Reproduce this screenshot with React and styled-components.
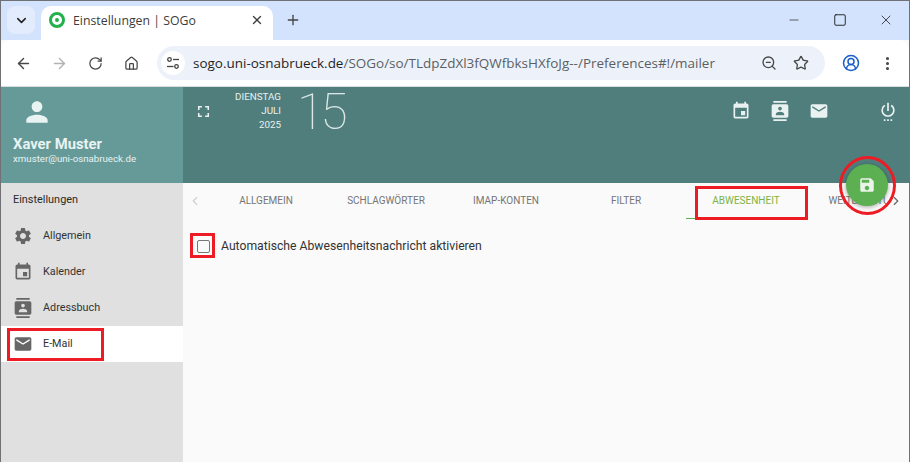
import React from 'react';
import styled, { createGlobalStyle } from 'styled-components';
import {
  MdContacts,
  MdEmail,
  MdEvent,
  MdFullscreen,
  MdPerson,
  MdSave,
  MdSettings,
  MdSettingsPower,
} from 'react-icons/md';
import {
  ArrowLeft,
  ArrowRight,
  ChevronDown,
  ChevronLeft,
  ChevronRight,
  CircleUserRound,
  EllipsisVertical,
  House,
  Minus,
  Plus,
  RotateCw,
  Square,
  Star,
  X,
  ZoomOut,
} from 'lucide-react';

const GlobalStyle = createGlobalStyle`
  html, body {
    margin: 0;
    padding: 0;
    background: #fafafa;
  }
  * {
    box-sizing: border-box;
  }
`;

const Page = styled.div`
  position: relative;
  width: 910px;
  height: 462px;
  overflow: hidden;
  display: flex;
  flex-direction: column;
  border: 1px solid #6f7174;
  border-bottom: none;
  font-family: "Noto Sans", sans-serif;
`;

const TabStrip = styled.div`
  height: 39px;
  flex: none;
  display: flex;
  align-items: flex-end;
  background: #d3e3fd;
  padding-left: 6px;
`;

const TabListButton = styled.div`
  width: 28px;
  height: 28px;
  margin-bottom: 6px;
  border-radius: 8px;
  background: #e2ecfc;
  display: flex;
  align-items: center;
  justify-content: center;
  color: #1f1f1f;
`;

const Tab = styled.div`
  width: 232px;
  height: 34px;
  margin-left: 6px;
  padding: 0 9px 6px 8px;
  border-radius: 10px 10px 0 0;
  background: #fff;
  display: flex;
  align-items: center;
  color: #3c3c3c;
  font-family: "Open Sans", sans-serif;
  font-size: 12.3px;
`;

const Favicon = styled.span`
  width: 16px;
  height: 16px;
  flex: none;
  border-radius: 50%;
  border: 3px solid #22b14c;
  display: flex;
  align-items: center;
  justify-content: center;
  margin-right: 8px;

  &::after {
    content: '';
    width: 4px;
    height: 4px;
    border-radius: 50%;
    background: #22b14c;
  }
`;

const TabTitle = styled.span`
  flex: 1;
`;

const NewTab = styled.div`
  width: 40px;
  height: 34px;
  padding-bottom: 6px;
  display: flex;
  align-items: center;
  justify-content: center;
  color: #444;
`;

const WindowControls = styled.div`
  margin-left: auto;
  height: 39px;
  display: flex;
  color: #1f1f1f;
`;

const WindowButton = styled.div`
  width: 46px;
  display: flex;
  align-items: center;
  justify-content: center;
  padding-bottom: 1px;
`;

const Toolbar = styled.div`
  height: 47px;
  flex: none;
  display: flex;
  align-items: center;
  background: #fff;
  border-radius: 10px 10px 0 0;
  border-bottom: 1px solid #d9dde0;
`;

const NavButton = styled.div`
  width: 36px;
  flex: none;
  display: flex;
  align-items: center;
  justify-content: center;
  color: ${props => (props.$dim ? '#b0b3b6' : '#474747')};
`;

const NavGroup = styled.div`
  display: flex;
  padding-left: 4px;
  margin-right: 8px;
`;

const Omnibox = styled.div`
  width: 668px;
  height: 34px;
  border-radius: 17px;
  background: #edf2fa;
  display: flex;
  align-items: center;
  padding: 0 8px 0 4px;
`;

const SiteInfo = styled.div`
  width: 24px;
  height: 24px;
  border-radius: 50%;
  background: #fff;
  display: flex;
  align-items: center;
  justify-content: center;
  margin-right: 8px;
`;

const Url = styled.div`
  flex: 1;
  font-family: "Open Sans", sans-serif;
  font-size: 13.48px;
  color: #5b5f63;
  white-space: nowrap;

  b {
    font-weight: 400;
    color: #1f1f1f;
  }
`;

const OmniIcon = styled.div`
  width: 32px;
  display: flex;
  justify-content: center;
  color: #474747;
`;

const ToolbarEnd = styled.div`
  display: flex;
  margin-left: 8px;
`;

const AppBody = styled.div`
  flex: 1;
  display: flex;
  min-height: 0;
`;

const Sidebar = styled.aside`
  width: 182px;
  flex: none;
  background: #e0e0e0;
  display: flex;
  flex-direction: column;
  font-family: "Roboto", sans-serif;
`;

const UserBox = styled.div`
  height: 96px;
  flex: none;
  background: #669a98;
  color: #e8f3f2;
  padding: 9px 12px 0;
`;

const UserName = styled.div`
  font-size: 14.8px;
  font-weight: 700;
  line-height: 18px;
  margin-top: 3px;
`;

const UserMail = styled.div`
  font-size: 9.7px;
  line-height: 11px;
`;

const SidebarTitle = styled.div`
  height: 35px;
  padding: 0 0 3px 12px;
  display: flex;
  align-items: center;
  font-size: 10.9px;
  color: #2a2a2a;
`;

const NavRow = styled.div`
  position: relative;
  height: 36px;
  display: flex;
  align-items: center;
  padding: 0 0 1px 12px;
  gap: 10px;
  font-size: 10.8px;
  color: #333;
  background: ${props => (props.$active ? '#fff' : 'transparent')};

  svg {
    color: #666;
    flex: none;
  }
`;

const Main = styled.main`
  flex: 1;
  display: flex;
  flex-direction: column;
  min-width: 0;
  background: #fafafa;
  font-family: "Roboto", sans-serif;
`;

const AppHeader = styled.header`
  height: 96px;
  flex: none;
  background: #4f7e7c;
  color: #eaf2f1;
  display: flex;
  padding-left: 11px;
`;

const HeaderIcon = styled.div`
  height: 48px;
  display: flex;
  align-items: center;
  width: ${props => props.$w || 'auto'};
  justify-content: center;
`;

const DateLines = styled.div`
  width: 68px;
  padding-top: 3px;
  text-align: right;
  font-size: 9.8px;
  line-height: 14px;
`;

const DayNumber = styled.div`
  font-family: "Roboto", sans-serif;
  font-weight: 100;
  font-size: 50px;
  line-height: 50px;
  letter-spacing: -4px;
  margin-left: 16px;
  color: #dbe8e7;
`;

const HeaderActions = styled.div`
  margin-left: auto;
  display: flex;
  padding-right: 2px;
`;

const TabBar = styled.nav`
  height: 36px;
  flex: none;
  display: flex;
  align-items: center;
  background: #fafafa;
`;

const TabArrow = styled.div`
  width: ${props => props.$w};
  flex: none;
  display: flex;
  justify-content: center;
  color: ${props => props.$color};
`;

const TabScroller = styled.div`
  width: 680px;
  flex: none;
  display: flex;
  overflow: hidden;
  align-self: stretch;
`;

const PrefTab = styled.div`
  width: 120px;
  flex: none;
  display: flex;
  align-items: center;
  justify-content: center;
  font-size: 10px;
  color: ${props => (props.$active ? '#7cb342' : '#757575')};
  border-bottom: 1px solid ${props => (props.$active ? '#5cb052' : 'transparent')};
  white-space: nowrap;
`;

const Content = styled.div`
  padding: 20px 0 0 14px;
  display: flex;
  align-items: center;
  gap: 11px;
  font-size: 12.2px;
  color: #333;
`;

const CheckBox = styled.span`
  width: 13px;
  height: 13px;
  border: 1.5px solid #777;
  border-radius: 2px;
  flex: none;
`;

const Fab = styled.div`
  position: absolute;
  left: 845px;
  top: 163px;
  width: 42px;
  height: 42px;
  border-radius: 50%;
  background: #5cb052;
  color: #e9f5e8;
  display: flex;
  align-items: center;
  justify-content: center;
  box-shadow: 0 1px 4px rgba(0, 0, 0, 0.35);
`;

const RedBox = styled.div`
  position: absolute;
  left: ${props => props.$x}px;
  top: ${props => props.$y}px;
  width: ${props => props.$w}px;
  height: ${props => props.$h}px;
  border: 3px solid #ed1c24;
  border-radius: ${props => (props.$round ? '50%' : '0')};
  pointer-events: none;
`;

const navItems = [
  { label: 'Allgemein', Icon: MdSettings },
  { label: 'Kalender', Icon: MdEvent },
  { label: 'Adressbuch', Icon: MdContacts },
  { label: 'E-Mail', Icon: MdEmail, active: true },
];

const prefTabs = ['ALLGEMEIN', 'SCHLAGWÖRTER', 'IMAP-KONTEN', 'FILTER', 'ABWESENHEIT', 'WEITERLEITUNG'];

function SiteInfoIcon() {
  return (
    <svg width="14" height="14" viewBox="0 0 14 14" fill="none" stroke="#444" strokeWidth="1.3">
      <circle cx="3.5" cy="3.5" r="1.8" />
      <path d="M7 3.5h6" />
      <circle cx="10.5" cy="10.5" r="1.8" />
      <path d="M1 10.5h6.5" />
    </svg>
  );
}

export default function App() {
  return (
    <Page>
      <GlobalStyle />
      <TabStrip>
        <TabListButton><ChevronDown size={15} strokeWidth={2.4} /></TabListButton>
        <Tab>
          <Favicon />
          <TabTitle>Einstellungen | SOGo</TabTitle>
          <X size={14} strokeWidth={2.2} />
        </Tab>
        <NewTab><Plus size={16} strokeWidth={2} /></NewTab>
        <WindowControls>
          <WindowButton><Minus size={14} strokeWidth={1.2} /></WindowButton>
          <WindowButton><Square size={14} strokeWidth={1.6} /></WindowButton>
          <WindowButton><X size={16} strokeWidth={1.2} /></WindowButton>
        </WindowControls>
      </TabStrip>
      <Toolbar>
        <NavGroup>
          <NavButton><ArrowLeft size={17} strokeWidth={2} /></NavButton>
          <NavButton $dim><ArrowRight size={17} strokeWidth={2} /></NavButton>
          <NavButton><RotateCw size={15} strokeWidth={2} /></NavButton>
          <NavButton><House size={15} strokeWidth={2} /></NavButton>
        </NavGroup>
        <Omnibox>
          <SiteInfo><SiteInfoIcon /></SiteInfo>
          <Url><b>sogo.uni-osnabrueck.de</b>/SOGo/so/TLdpZdXl3fQWfbksHXfoJg--/Preferences#!/mailer</Url>
          <OmniIcon><ZoomOut size={16} strokeWidth={2} /></OmniIcon>
          <OmniIcon><Star size={16} strokeWidth={2} /></OmniIcon>
        </Omnibox>
        <ToolbarEnd>
          <NavButton><CircleUserRound size={18} strokeWidth={2} color="#1a5fc8" /></NavButton>
          <NavButton><EllipsisVertical size={17} strokeWidth={2.4} /></NavButton>
        </ToolbarEnd>
      </Toolbar>
      <AppBody>
        <Sidebar>
          <UserBox>
            <MdPerson size={32} style={{ marginLeft: 8 }} />
            <UserName>Xaver Muster</UserName>
            <UserMail>xmuster@uni-osnabrueck.de</UserMail>
          </UserBox>
          <SidebarTitle>Einstellungen</SidebarTitle>
          {navItems.map(({ label, Icon, active }) => (
            <NavRow key={label} $active={active}>
              <Icon size={20} />
              {label}
            </NavRow>
          ))}
        </Sidebar>
        <Main>
          <AppHeader>
            <HeaderIcon><MdFullscreen size={19} /></HeaderIcon>
            <DateLines>
              DIENSTAG<br />JULI<br />2025
            </DateLines>
            <DayNumber>15</DayNumber>
            <HeaderActions>
              <HeaderIcon $w="39px"><MdEvent size={20} /></HeaderIcon>
              <HeaderIcon $w="39px"><MdContacts size={20} /></HeaderIcon>
              <HeaderIcon $w="39px"><MdEmail size={20} /></HeaderIcon>
              <HeaderIcon $w="30px" />
              <HeaderIcon $w="39px"><MdSettingsPower size={20} /></HeaderIcon>
            </HeaderActions>
          </AppHeader>
          <TabBar>
            <TabArrow $w="23px" $color="#cfcfcf"><ChevronLeft size={14} /></TabArrow>
            <TabScroller>
              {prefTabs.map(name => (
                <PrefTab key={name} $active={name === 'ABWESENHEIT'}>{name}</PrefTab>
              ))}
            </TabScroller>
            <TabArrow $w="20px" $color="#666"><ChevronRight size={14} /></TabArrow>
          </TabBar>
          <Content>
            <CheckBox />
            Automatische Abwesenheitsnachricht aktivieren
          </Content>
        </Main>
      </AppBody>
      <Fab><MdSave size={18} /></Fab>
      <RedBox $x={6} $y={327} $w={97} $h={33} />
      <RedBox $x={189} $y={232} $w={25} $h={25} />
      <RedBox $x={694} $y={185} $w={113} $h={34} />
      <RedBox $x={838} $y={155} $w={57} $h={59} $round />
    </Page>
  );
}
